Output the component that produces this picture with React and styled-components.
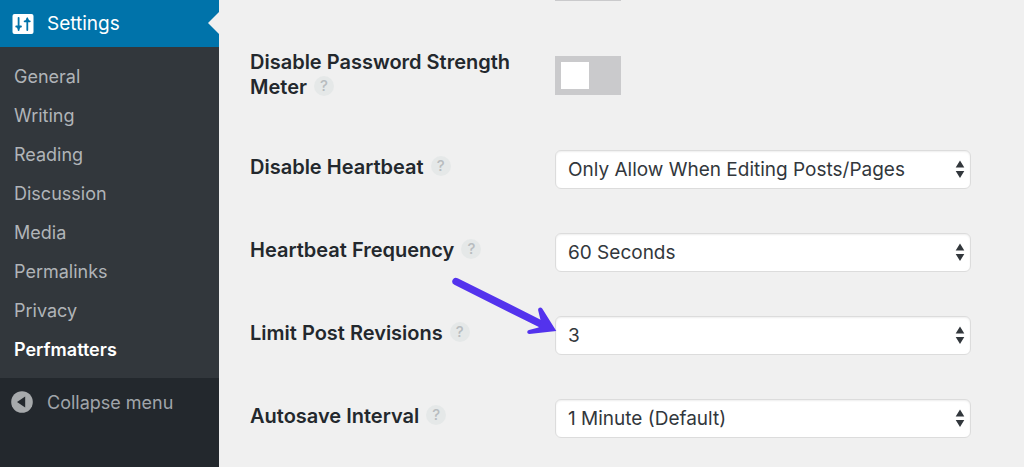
import React from 'react';
import styled, { createGlobalStyle } from 'styled-components';

const GlobalStyle = createGlobalStyle`
    * {
        box-sizing: border-box;
    }
    body {
        margin: 0;
        background-color: #f0f0f0;
        font-family: Inter, "Liberation Sans", sans-serif;
    }
    button, select {
        font-family: inherit;
    }
`

const Page = styled.div`
    display: flex;
    min-height: 100vh;
    overflow: hidden;
`

const Sidebar = styled.nav`
    flex: 0 0 219px;
    background-color: #23282d;
`

const MenuTop = styled.a`
    position: relative;
    display: flex;
    align-items: center;
    gap: 12px;
    height: 47px;
    padding-left: 12px;
    background-color: #0073aa;
    color: #fff;
    font-size: 19px;
    text-decoration: none;

    &::after {
        content: '';
        position: absolute;
        right: 0;
        top: 12px;
        border: 11px solid transparent;
        border-left-width: 0;
        border-right-color: #f0f0f0;
    }
`

const Submenu = styled.ul`
    margin: 0;
    padding: 10px 0 9px;
    list-style: none;
    background-color: #32373c;
`

const SubmenuLink = styled.a`
    display: block;
    padding-left: 14px;
    font-size: 18px;
    line-height: 39px;
    text-decoration: none;
    font-weight: ${props => props.$current ? 600 : 400};
    color: ${props => props.$current ? '#fff' : '#b0b4b8'};
`

const CollapseButton = styled.button`
    display: flex;
    align-items: center;
    gap: 14px;
    width: 100%;
    height: 48px;
    padding: 0 0 0 11px;
    border: 0;
    background: none;
    color: #a0a5aa;
    font-size: 18px;
`

/* the form is scrolled, the first row is mostly above the window */
const Form = styled.form`
    flex: 1;
    min-width: 0;
    margin-top: -60px;
    padding: 0 53px 0 31px;
`

const Row = styled.div`
    display: grid;
    grid-template-columns: 305px 1fr;
`

const LabelCell = styled.div`
    padding: 27px 30px 28px 0;
    color: #23282d;
    font-size: 20px;
    font-weight: 600;
    line-height: 25px;
`

const Help = styled.a`
    display: inline-block;
    width: 20px;
    height: 20px;
    margin-left: 7px;
    border-radius: 50%;
    background-color: #e5e8e8;
    color: #b8bcbf;
    font-size: 15px;
    font-weight: 500;
    line-height: 20px;
    text-align: center;
    text-decoration: none;
    vertical-align: 3px;
`

const Control = styled.div`
    display: flex;
    align-self: center;
    padding: 22px 0;
`

const Toggle = styled.input`
    appearance: none;
    width: 66px;
    height: 39px;
    margin: 0;
    padding: 6px;
    background-color: #cacacc;

    &::before {
        content: '';
        display: block;
        width: 28px;
        height: 27px;
        background-color: #fff;
    }
    &:checked {
        background-color: #0073aa;
    }
    &:checked::before {
        margin-left: auto;
    }
`

const SelectBox = styled.div`
    position: relative;
    flex: 1;
    min-width: 0;
`

const Select = styled.select`
    appearance: none;
    display: block;
    width: 100%;
    height: 39px;
    padding: 0 32px 0 12px;
    border: 1px solid #dcdcdc;
    border-radius: 6px;
    background-color: #fff;
    box-shadow: inset 0 1px 2px rgba(0, 0, 0, 0.07);
    color: #32373c;
    font-size: 19px;
`

const SelectArrows = styled.svg`
    position: absolute;
    right: 6px;
    top: 10px;
    pointer-events: none;
`

const Pointer = styled.svg`
    position: absolute;
    left: -107px;
    top: -44px;
    pointer-events: none;
`

const submenu = ['General', 'Writing', 'Reading', 'Discussion', 'Media', 'Permalinks', 'Privacy', 'Perfmatters'];

function SettingsIcon() {
    return (
        <svg width="23" height="22" viewBox="0 0 23 22" aria-hidden="true">
            <rect x="0.5" y="1" width="21" height="20" rx="2" fill="#fff" />
            <g fill="none" stroke="#0073aa" strokeWidth="1.8" strokeLinecap="round">
                <path d="M6.6 4.800V17M15.300 5.500V17" />
                <path d="M4.200 13.500H9M12.600 8.300H17.800" />
            </g>
            <path d="M4.600 14H8.600L6.600 17.500Z M13 8H17.600L15.300 4.600Z" fill="#0073aa" />
        </svg>
    );
}

function CollapseIcon() {
    return (
        <svg width="22" height="22" viewBox="0 0 22 22" aria-hidden="true">
            <circle cx="11" cy="11" r="10.8" fill="#a7aaac" />
            <path d="M6 11L14.2 5.6V16.4Z" fill="#23282d" />
        </svg>
    );
}

function SettingLabel({ id, children }) {
    return (
        <LabelCell>
            <label htmlFor={id}>{children}</label>
            <Help href="#" aria-label={'Help: ' + children}>?</Help>
        </LabelCell>
    );
}

function SelectRow({ id, label, value, pointed }) {
    return (
        <Row>
            <SettingLabel id={id}>{label}</SettingLabel>
            <Control>
                <SelectBox>
                    <Select id={id} defaultValue={value}>
                        <option>{value}</option>
                    </Select>
                    <SelectArrows width="10" height="19" viewBox="0 0 10 19" aria-hidden="true">
                        <path d="M5 0.5L9.3 7.6H0.7Z M5 18L9.3 11H0.7Z" fill="#32373c" />
                    </SelectArrows>
                    {pointed && (
                        <Pointer width="116" height="70" viewBox="0 0 116 70" aria-hidden="true">
                            <path d="M8 9.5L92 51.5" stroke="#5333ed" strokeWidth="7.4" strokeLinecap="round" />
                            <path
                                d="M108.3 59L94.2 36.4Q92.6 34.6 90.8 36Q89.8 37 90.2 38.600L93 50L90.500 55.600L81 58Q79.200 58.600 79.200 60.200Q79.400 62 81.400 62Z"
                                fill="#5333ed"
                            />
                        </Pointer>
                    )}
                </SelectBox>
            </Control>
        </Row>
    );
}

function App() {
    return (
        <>
            <GlobalStyle />
            <Page>
                <Sidebar>
                    <MenuTop href="#">
                        <SettingsIcon />
                        Settings
                    </MenuTop>
                    <Submenu>
                        {submenu.map(item => (
                            <li key={item}>
                                <SubmenuLink href="#" $current={item === 'Perfmatters'}>{item}</SubmenuLink>
                            </li>
                        ))}
                    </Submenu>
                    <CollapseButton type="button">
                        <CollapseIcon />
                        Collapse menu
                    </CollapseButton>
                </Sidebar>
                <Form>
                    <Row>
                        <span />
                        <Control>
                            <Toggle type="checkbox" aria-label="Disable Google Maps" />
                        </Control>
                    </Row>
                    <Row>
                        <SettingLabel id="password-meter">Disable Password Strength Meter</SettingLabel>
                        <Control>
                            <Toggle type="checkbox" id="password-meter" />
                        </Control>
                    </Row>
                    <SelectRow id="heartbeat" label="Disable Heartbeat" value="Only Allow When Editing Posts/Pages" />
                    <SelectRow id="frequency" label="Heartbeat Frequency" value="60 Seconds" />
                    <SelectRow id="revisions" label="Limit Post Revisions" value="3" pointed />
                    <SelectRow id="autosave" label="Autosave Interval" value="1 Minute (Default)" />
                </Form>
            </Page>
        </>
    );
}

export default App;
